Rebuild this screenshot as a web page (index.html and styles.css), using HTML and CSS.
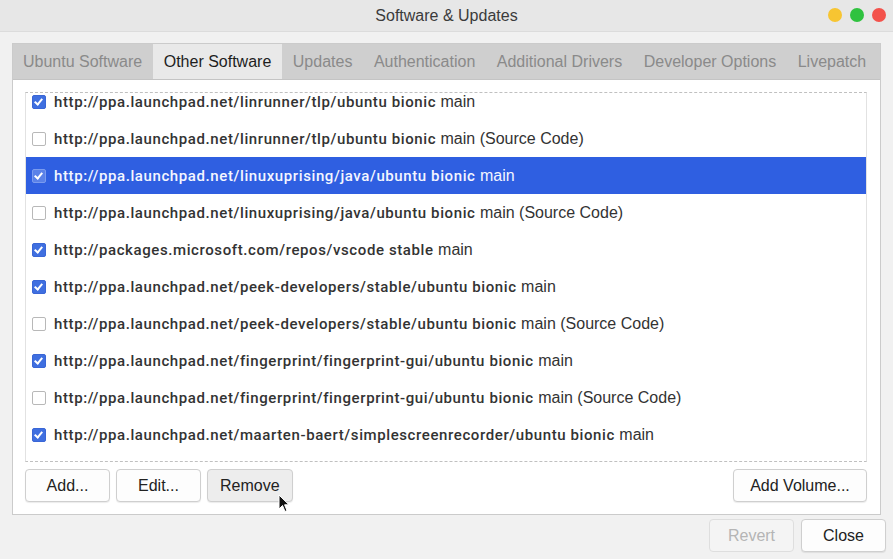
FILE: index.html
```html
<!DOCTYPE html>
<html>
<head>
  <title>Software &amp; Updates</title>
  <link rel="stylesheet" href="styles.css">
</head>
<body>
  <div class="window">
    <div class="titlebar">
      <span class="title">Software &amp; Updates</span>
      <div class="lights">
        <span class="light yellow"></span>
        <span class="light green"></span>
        <span class="light red"></span>
      </div>
    </div>

    <div class="main">
      <div class="notebook">
        <div class="tabs">
          <div class="tab">Ubuntu Software</div>
          <div class="tab active">Other Software</div>
          <div class="tab">Updates</div>
          <div class="tab">Authentication</div>
          <div class="tab">Additional Drivers</div>
          <div class="tab">Developer Options</div>
          <div class="tab">Livepatch</div>
        </div>

        <div class="page">
          <div class="list">
            <div class="rows">
              <div class="row"><span class="check on"></span><span class="url">http://ppa.launchpad.net/linrunner/tlp/ubuntu bionic</span> main</div>
              <div class="row"><span class="check"></span><span class="url">http://ppa.launchpad.net/linrunner/tlp/ubuntu bionic</span> main (Source Code)</div>
              <div class="row selected"><span class="check on"></span><span class="url">http://ppa.launchpad.net/linuxuprising/java/ubuntu bionic</span> main</div>
              <div class="row"><span class="check"></span><span class="url">http://ppa.launchpad.net/linuxuprising/java/ubuntu bionic</span> main (Source Code)</div>
              <div class="row"><span class="check on"></span><span class="url">http://packages.microsoft.com/repos/vscode stable</span> main</div>
              <div class="row"><span class="check on"></span><span class="url">http://ppa.launchpad.net/peek-developers/stable/ubuntu bionic</span> main</div>
              <div class="row"><span class="check"></span><span class="url">http://ppa.launchpad.net/peek-developers/stable/ubuntu bionic</span> main (Source Code)</div>
              <div class="row"><span class="check on"></span><span class="url">http://ppa.launchpad.net/fingerprint/fingerprint-gui/ubuntu bionic</span> main</div>
              <div class="row"><span class="check"></span><span class="url">http://ppa.launchpad.net/fingerprint/fingerprint-gui/ubuntu bionic</span> main (Source Code)</div>
              <div class="row"><span class="check on"></span><span class="url">http://ppa.launchpad.net/maarten-baert/simplescreenrecorder/ubuntu bionic</span> main</div>
            </div>
          </div>

          <div class="list-buttons">
            <button class="btn">Add...</button>
            <button class="btn">Edit...</button>
            <button class="btn hover">Remove</button>
            <span class="spacer"></span>
            <button class="btn wide">Add Volume...</button>
          </div>
        </div>
      </div>

      <div class="dialog-buttons">
        <button class="btn" disabled>Revert</button>
        <button class="btn">Close</button>
      </div>
    </div>

    <svg class="cursor" width="12" height="19" viewBox="0 0 12 19">
      <path d="M1 1 L1 15 L4.5 11.5 L7 17.5 L9 16.6 L6.6 10.8 L11 10.8 Z" fill="#111" stroke="#fff" stroke-width="1"/>
    </svg>
  </div>
</body>
</html>
```

FILE: styles.css
```css
/* Software & Updates window */
body {
  margin: 0;
  font-family: "Liberation Sans", Arial, sans-serif;
  background-color: #f0f0f0;
}

.window {
  position: relative;
  width: 893px;
  height: 559px;
  background-color: #f1f1f1;
  overflow: hidden;
}

.titlebar {
  position: relative;
  height: 31px;
  background-color: #e7e7e7;
  border-bottom: 1px solid #dcdcdc;
  display: flex;
  align-items: center;
  justify-content: center;
}

.title {
  font-size: 16px;
  color: #3b3b3b;
}

.lights {
  position: absolute;
  right: 7px;
  top: 8px;
  display: flex;
  gap: 8px;
}

.light {
  width: 14px;
  height: 14px;
  border-radius: 50%;
}

.light.yellow { background-color: #f7c532; }
.light.green { background-color: #2fc23f; }
.light.red { background-color: #f3524b; }

.main {
  padding: 11px 12px 0 12px;
}

.notebook {
  width: 867px;
  border: 1px solid #cbcbcb;
  background-color: #fff;
}

.tabs {
  display: flex;
  height: 35px;
  overflow: hidden;
  background-color: #cfcfcf;
  border-bottom: 1px solid #c4c4c4;
}

.tab {
  flex: none;
  padding: 0 11px 0 10.5px;
  line-height: 35px;
  font-size: 16px;
  color: #8a8a8a;
  white-space: nowrap;
}

.tab:first-child {
  padding-left: 10px;
}

.tab.active {
  background-color: #e9e9e9;
  color: #1e1e1e;
}

.page {
  padding: 12px 13px 12px 12px;
}

.list {
  height: 368px;
  overflow: hidden;
  border: 1px solid #e2e2e2;
  border-top: 1px dashed #c0c0c0;
  border-bottom: 1px dashed #c0c0c0;
}

.rows {
  margin-top: -10px;
}

.row {
  display: flex;
  align-items: center;
  height: 37px;
  padding-left: 6px;
  font-size: 16px;
  color: #333;
  white-space: pre;
}

.row.selected {
  background-color: #2f5fe1;
  color: #f4f6ff;
}

.url {
  font-family: Roboto, "DejaVu Sans", sans-serif;
  font-weight: 500;
  font-size: 15px;
  letter-spacing: 0.6px;
}

.check {
  width: 12px;
  height: 12px;
  margin-right: 8px;
  border: 1px solid #b8b8b8;
  border-radius: 2px;
  background-color: #fff;
  position: relative;
  flex: none;
}

.check.on {
  background-color: #3f6fe0;
  border-color: #3a66d6;
}

.check.on::after {
  content: "";
  position: absolute;
  left: 3px;
  top: 1px;
  width: 3px;
  height: 6px;
  border-right: 2px solid #fff;
  border-bottom: 2px solid #fff;
  transform: rotate(40deg);
}

.row.selected .check.on {
  background-color: #5b82e8;
  border-color: #7a9bef;
}

.list-buttons {
  display: flex;
  gap: 6px;
  margin-top: 7px;
}

.spacer {
  flex: 1;
}

.btn {
  height: 33px;
  min-width: 85px;
  padding: 0 12px;
  font-family: "Liberation Sans", Arial, sans-serif;
  font-size: 16px;
  color: #222;
  background-color: #fdfdfd;
  border: 1px solid #cfcfcf;
  border-radius: 4px;
  box-shadow: 0 1px 1px rgba(0, 0, 0, 0.08);
}

.btn.hover {
  background-color: #ededed;
}

.btn.wide {
  min-width: 134px;
}

.btn:disabled {
  color: #b5b5b5;
  background-color: #f4f4f4;
  border-color: #dedede;
  box-shadow: none;
}

.dialog-buttons {
  display: flex;
  justify-content: flex-end;
  gap: 7px;
  margin-top: 4px;
  margin-right: -5px;
}

.cursor {
  position: absolute;
  left: 278px;
  top: 494px;
}
```
